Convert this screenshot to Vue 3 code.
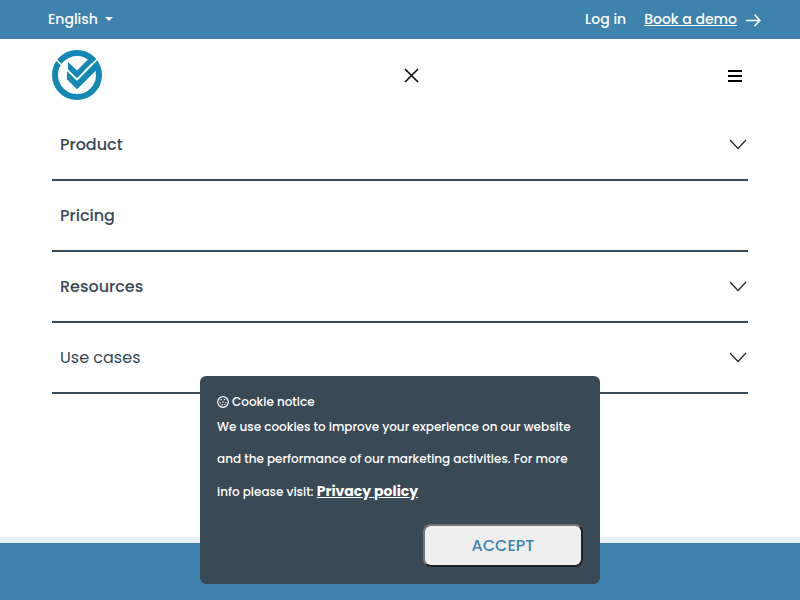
<script setup>
import { ref } from 'vue'

const menuItems = [
  { label: 'Product', expandable: true },
  { label: 'Pricing', expandable: false },
  { label: 'Resources', expandable: true },
  { label: 'Use cases', expandable: true, light: true }
]

const showCookies = ref(true)
</script>

<template>
  <div class="page">
    <div class="topbar">
      <button class="lang" type="button">English <span class="caret"></span></button>
      <div class="topbar-links">
        <a class="login" href="#">Log in</a>
        <a class="demo" href="#">
          <span>Book a demo</span>
          <svg width="15" height="14" viewBox="0 0 15 14" aria-hidden="true">
            <path d="M0 7.5H14M8.5 1.5L14 7.5L8.5 13" />
          </svg>
        </a>
      </div>
    </div>

    <header class="header">
      <a class="logo" href="#" aria-label="Home">
        <svg width="50" height="50" viewBox="0 0 50 50">
          <circle class="ring" cx="25" cy="25" r="22" />
          <path class="mark" d="M16 12L25 20.5L36.5 9L43 9.5L25 28.4L16 19.4Z" />
          <path class="mark" d="M15 21L25 30.6L45 10.6L47 17.5L25 39.2L15 29.2Z" />
          <path class="gap" d="M14 18.8L25 29.5L48 6.5M2.5 8L10.5 16" />
        </svg>
      </a>
      <button class="icon-btn close-btn" type="button" aria-label="Close menu">
        <svg width="15" height="15" viewBox="0 0 15 15">
          <path class="close-icon" d="M1 1L14 14M14 1L1 14" />
        </svg>
      </button>
      <button class="icon-btn" type="button" aria-label="Open menu">
        <svg width="14" height="12" viewBox="0 0 14 12">
          <path class="bars-icon" d="M0 1H14M0 6H14M0 11H14" />
        </svg>
      </button>
    </header>

    <nav class="menu">
      <button
        v-for="item in menuItems"
        :key="item.label"
        type="button"
        class="menu-item"
        :class="{ light: item.light }"
      >
        <span>{{ item.label }}</span>
        <svg v-if="item.expandable" width="18" height="11" viewBox="0 0 18 11" aria-hidden="true">
          <path d="M1 1L9 9.5L17 1" />
        </svg>
      </button>
    </nav>

    <footer class="footer"></footer>

    <section v-if="showCookies" class="cookie">
      <h2 class="cookie-title">
        <svg width="12" height="12" viewBox="0 0 12 12" aria-hidden="true">
          <circle class="cookie-edge" cx="6" cy="6" r="5.3" />
          <circle cx="4" cy="3.7" r="0.8" />
          <circle cx="7.5" cy="3.5" r="0.8" />
          <circle cx="3.2" cy="6.8" r="0.7" />
          <circle cx="6.1" cy="6" r="0.8" />
          <circle cx="8.9" cy="6.6" r="0.7" />
          <circle cx="5.3" cy="8.8" r="0.8" />
          <circle cx="7.9" cy="8.6" r="0.7" />
        </svg>
        Cookie notice
      </h2>
      <p class="cookie-text">
        We use cookies to improve your experience on our website and the performance of our
        marketing activities. For more info please visit: <a href="#">Privacy policy</a>
      </p>
      <button class="accept" type="button" @click="showCookies = false">ACCEPT</button>
    </section>
  </div>
</template>

<style>
body {
  margin: 0;
  background: #ffffff;
}
</style>

<style scoped>
.page {
  min-height: 100vh;
  display: flex;
  flex-direction: column;
  font-family: Poppins, Inter, sans-serif;
  color: #394956;
}
button {
  font-family: inherit;
  cursor: pointer;
}
svg {
  display: block;
  flex: none;
  fill: none;
}
.topbar {
  height: 39px;
  padding: 0 39px 0 48px;
  display: flex;
  align-items: center;
  justify-content: space-between;
  background: #3d83ae;
  color: #ffffff;
  font-size: 14px;
  font-weight: 500;
}
.lang {
  display: flex;
  align-items: center;
  gap: 7px;
  padding: 0;
  border: 0;
  background: none;
  color: inherit;
  font-size: 14px;
  font-weight: 500;
}
.caret {
  margin-bottom: 2px;
  border-top: 4px solid #ffffff;
  border-left: 4px solid transparent;
  border-right: 4px solid transparent;
}
.topbar-links {
  display: flex;
  align-items: center;
  gap: 18px;
}
.topbar a {
  color: inherit;
  text-decoration: none;
}
.demo {
  display: flex;
  align-items: center;
  gap: 9px;
}
.demo span {
  text-decoration: underline;
}
.demo path {
  stroke: #ffffff;
  stroke-width: 1.5;
}
.header {
  height: 71px;
  padding: 0 58px 0 52px;
  display: grid;
  grid-template-columns: 1fr auto 1fr;
  align-items: center;
}
.logo {
  justify-self: start;
}
.ring {
  stroke: #1488b5;
  stroke-width: 6;
}
.mark {
  fill: #1488b5;
}
.gap {
  stroke: #ffffff;
  stroke-width: 1.7;
}
.icon-btn {
  justify-self: end;
  padding: 2px 0 0;
  border: 0;
  background: none;
}
.close-btn {
  margin-left: 29px;
}
.close-icon {
  stroke: #000000;
  stroke-width: 1.5;
}
.bars-icon {
  stroke: #000000;
  stroke-width: 2;
}
.menu {
  flex: 1;
  padding: 0 52px;
}
.menu-item {
  width: 100%;
  height: 71px;
  padding: 0 1px 0 8px;
  display: flex;
  align-items: center;
  justify-content: space-between;
  border: 0;
  border-bottom: 2px solid #394956;
  background: none;
  color: #394956;
  font-size: 16px;
  font-weight: 500;
}
.menu-item.light {
  font-weight: 400;
}
.menu-item path {
  stroke: #212529;
  stroke-width: 1.2;
}
.footer {
  height: 57px;
  border-top: 6px solid #e9f2f6;
  background: #3d83ae;
}
.cookie {
  position: fixed;
  bottom: 16px;
  left: 50%;
  transform: translateX(-50%);
  width: 400px;
  max-width: 100%;
  box-sizing: border-box;
  padding: 17px;
  display: flex;
  flex-direction: column;
  border-radius: 6px;
  background: #394956;
  color: #ffffff;
}
.cookie-title {
  margin: 0;
  display: flex;
  align-items: center;
  gap: 3px;
  font-size: 12px;
  line-height: 18px;
  font-weight: 500;
}
.cookie-title svg {
  fill: #ffffff;
}
.cookie-title .cookie-edge {
  fill: none;
  stroke: #ffffff;
  stroke-width: 1.2;
}
.cookie-text {
  margin: 0 0 16px;
  font-size: 12px;
  line-height: 32px;
  font-weight: 500;
}
.cookie-text a {
  color: #ffffff;
  font-size: 14px;
  font-weight: 700;
}
.accept {
  align-self: flex-end;
  width: 160px;
  height: 43px;
  border: 2px outset #767676;
  border-radius: 8px;
  background: #efefef;
  color: #3d83ae;
  font-size: 16px;
  font-weight: 500;
}
</style>
